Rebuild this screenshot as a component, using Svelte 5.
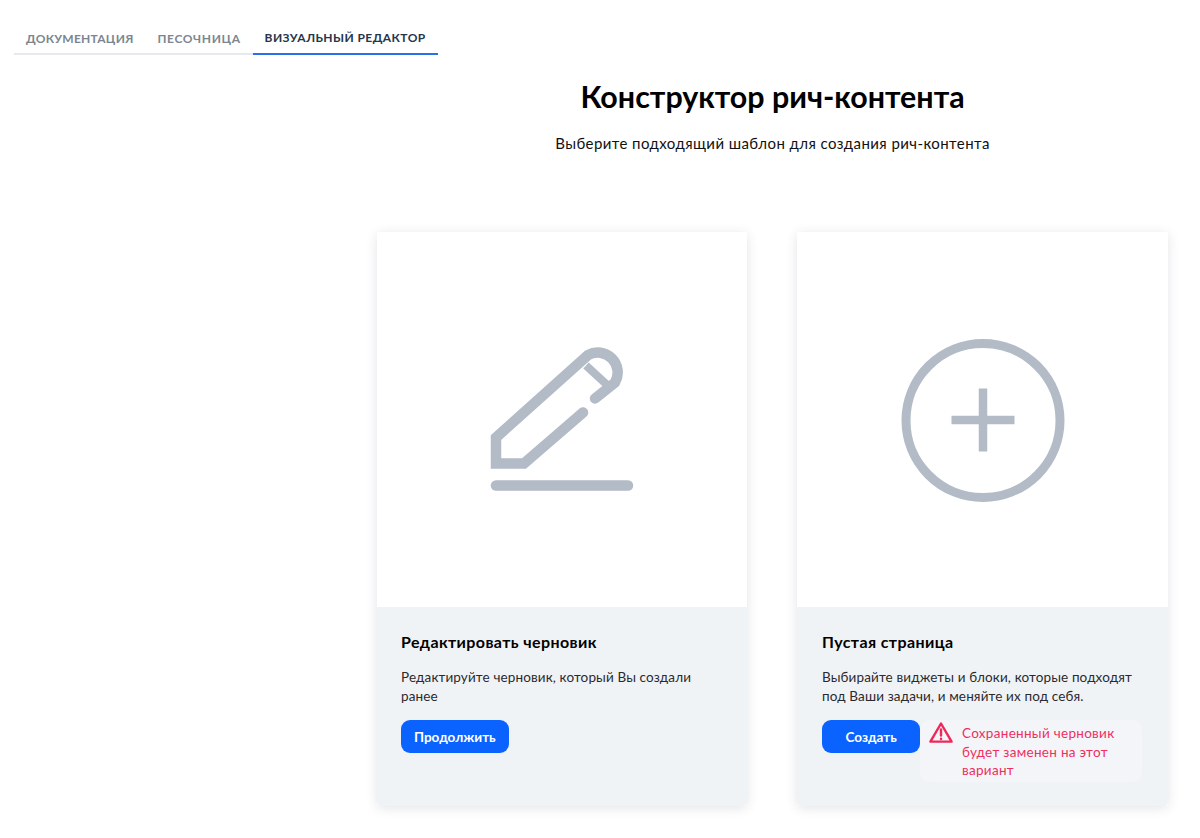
<script>
  const cards = [
    { title: 'Редактировать черновик', text: 'Редактируйте черновик, который Вы создали ранее', action: 'Продолжить', kind: 'edit' },
    { title: 'Пустая страница', text: 'Выбирайте виджеты и блоки, которые подходят под Ваши задачи, и меняйте их под себя.', action: 'Создать', kind: 'new' }
  ];
</script>

<div class="page">
  <nav class="tabs">
    <button class="tab">Документация</button>
    <button class="tab">Песочница</button>
    <button class="tab active">Визуальный редактор</button>
  </nav>

  <main class="main">
    <h1>Конструктор рич-контента</h1>
    <p class="sub">Выберите подходящий шаблон для создания рич-контента</p>

    <div class="cards">
      {#each cards as card}
        <section class="card">
          <div class="preview">
            {#if card.kind === 'edit'}
              <svg width="180" height="180" viewBox="2 -0.5 180 180" fill="none" stroke="#b2bbc6" stroke-width="10.5">
                <path d="M125 68 L145 52 A20 20 0 0 0 118 24.5 L26 107 V133 H54 L113 82" stroke-linecap="round" />
                <path d="M116 35 L141 58" stroke-width="8" />
                <path d="M26 155 H158" stroke-linecap="round" />
              </svg>
            {:else}
              <svg width="180" height="180" viewBox="2.5 -0.5 180 180" fill="none" stroke="#b2bbc6">
                <circle cx="92.5" cy="90" r="77" stroke-width="9" />
                <path d="M61 89.5 H124 M92.5 58 V121" stroke-width="8.5" />
              </svg>
            {/if}
          </div>
          <div class="body">
            <h2>{card.title}</h2>
            <p>{card.text}</p>
            <button class="cta">{card.action}</button>
            {#if card.kind === 'new'}
              <div class="warn">
                <svg width="26" height="24" viewBox="0 0 26 24" fill="none" stroke="#f0285a" stroke-width="2.4">
                  <path d="M13 2.5 L23.6 20.6 H2.4 Z" stroke-linejoin="round" />
                  <path d="M13 8.5 V14.5" stroke-linecap="round" />
                  <path d="M13 17.6 V18" stroke-linecap="round" />
                </svg>
                <span>Сохраненный черновик будет заменен на этот вариант</span>
              </div>
            {/if}
          </div>
        </section>
      {/each}
    </div>
  </main>
</div>

<style>
  :global(body) { margin: 0; background: #fff; }
  .page {
    height: 838px;
    box-sizing: border-box;
    overflow: hidden;
    font-family: "Lato", "Noto Sans", "Open Sans", sans-serif;
    color: #000;
    padding: 20px 32px 0 14px;
  }
  .tabs {
    display: flex;
    width: 424px;
    height: 35px;
    box-sizing: border-box;
    border-bottom: 2px solid #e6e9f2;
  }
  .tab {
    height: 35px;
    border: 0;
    background: none;
    padding: 1px 12px 0 12px;
    font: 700 12px "Lato", "Noto Sans", sans-serif;
    letter-spacing: 0.6px;
    text-transform: uppercase;
    color: #7b8690;
    white-space: nowrap;
  }
  .tab:first-child { letter-spacing: 0.27px; }
  .tab.active {
    color: #25364d;
    letter-spacing: 0.42px;
    border-bottom: 2px solid #2a70e8;
    flex: 1;
    text-align: left;
  }
  .main { margin-left: 363px; }
  h1 {
    margin: 21px 0 0;
    text-align: center;
    font-size: 30.4px;
    line-height: 40px;
    font-weight: 700;
  }
  .sub {
    margin: 17px 0 0;
    text-align: center;
    font-size: 15px;
    line-height: 20px;
    letter-spacing: 0.42px;
    color: #111;
  }
  .cards {
    display: grid;
    grid-template-columns: 370px 371px;
    column-gap: 50px;
    margin-top: 79px;
  }
  .card {
    height: 574px;
    display: flex;
    flex-direction: column;
    background: #fff;
    box-shadow: 0 2px 12px rgba(40, 50, 70, 0.13);
    border-radius: 2px;
  }
  .preview {
    height: 375px;
    display: flex;
    align-items: center;
    justify-content: center;
  }
  .body {
    position: relative;
    flex: 1;
    background: #f0f3f6;
    padding: 25px 25px 0 25px;
    border-radius: 0 0 4px 4px;
  }
  .card:first-child .body { padding-left: 24px; }
  h2 {
    margin: 0;
    font-size: 16px;
    line-height: 20px;
    font-weight: 700;
    letter-spacing: 0.4px;
  }
  .body p {
    margin: 16px 0 0;
    font-size: 13.5px;
    line-height: 19px;
    letter-spacing: 0.13px;
    color: #2a2a2e;
    min-height: 38px;
  }
  .cta {
    display: block;
    margin-top: 14px;
    height: 33px;
    padding: 0 13px;
    border: 0;
    border-radius: 9px;
    background: #0a63ff;
    color: #fff;
    font: 700 13.5px "Lato", "Noto Sans", sans-serif;
  }
  .card:last-child .cta { padding: 0 23.5px; }
  .warn {
    position: absolute;
    left: 123px;
    top: 113px;
    width: 222px;
    height: 62px;
    box-sizing: border-box;
    display: flex;
    gap: 8px;
    padding: 4px 24px 0 8px;
    background: #f3f5f9;
    border-radius: 10px;
    color: #ef2f5f;
    font-size: 13.5px;
    line-height: 18.7px;
    letter-spacing: 0.3px;
  }
  .warn svg { flex: none; margin-top: -3px; }
</style>
